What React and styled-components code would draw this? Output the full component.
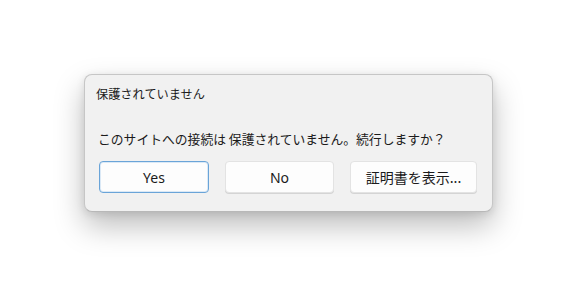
import React from "react";
import styled, { createGlobalStyle } from "styled-components";

const Global = createGlobalStyle`
  html, body { margin: 0; padding: 0; background: #ffffff; }
  body { font-family: "Noto Sans", "Noto Sans CJK JP", sans-serif; }
`;

const Page = styled.div`
  width: 566px;
  height: 301px;
  box-sizing: border-box;
  padding: 74px 0 0 84px;
  background: #ffffff;
`;

const Dialog = styled.div`
  width: 409px;
  height: 138px;
  box-sizing: border-box;
  background: #f1f1f1;
  border: 1px solid #c6c6c6;
  border-bottom-color: #b8b8b8;
  border-radius: 8px;
  box-shadow: 0 14px 30px rgba(0, 0, 0, 0.26), 0 2px 8px rgba(0, 0, 0, 0.1);
  display: flex;
  flex-direction: column;
  padding: 0 15px 0 14px;
`;

const Title = styled.div`
  font-family: "Noto Sans CJK JP", sans-serif;
  font-size: 12.2px;
  line-height: 16px;
  color: #1b1b1b;
  margin: 11px 0 0 -3px;
`;

const Message = styled.div`
  font-family: "Noto Sans CJK JP", sans-serif;
  font-size: 12.8px;
  line-height: 18px;
  color: #1b1b1b;
  margin: 28px 0 0 -1px;
`;

const Buttons = styled.div`
  display: flex;
  gap: 16px;
  margin-top: 13px;
`;

const Button = styled.button`
  width: ${(p) => p.$w}px;
  height: 32px;
  box-sizing: border-box;
  border-radius: 4px;
  background: #fdfdfd;
  border: 1px solid ${(p) => (p.$primary ? "#6aa4d8" : "#e3e3e3")};
  box-shadow: ${(p) => (p.$primary ? "inset 0 0 0 1px #dbe9f6" : "0 1px 0 #d4d4d4")};
  font-family: "Noto Sans", "Noto Sans CJK JP", sans-serif;
  font-size: 14px;
  color: #1b1b1b;
  padding: 0;
  display: flex;
  align-items: center;
  justify-content: center;
`;

const CjkLabel = styled.span`
  font-family: "Noto Sans CJK JP", sans-serif;
  font-size: 14px;
`;

export default function App() {
  return (
    <>
      <Global />
      <Page>
        <Dialog>
          <Title>保護されていません</Title>
          <Message>このサイトへの接続は 保護されていません。続行しますか？</Message>
          <Buttons>
            <Button $primary $w={110}>Yes</Button>
            <Button $w={109}>No</Button>
            <Button $w={127}>
              <CjkLabel>証明書を表示...</CjkLabel>
            </Button>
          </Buttons>
        </Dialog>
      </Page>
    </>
  );
}
